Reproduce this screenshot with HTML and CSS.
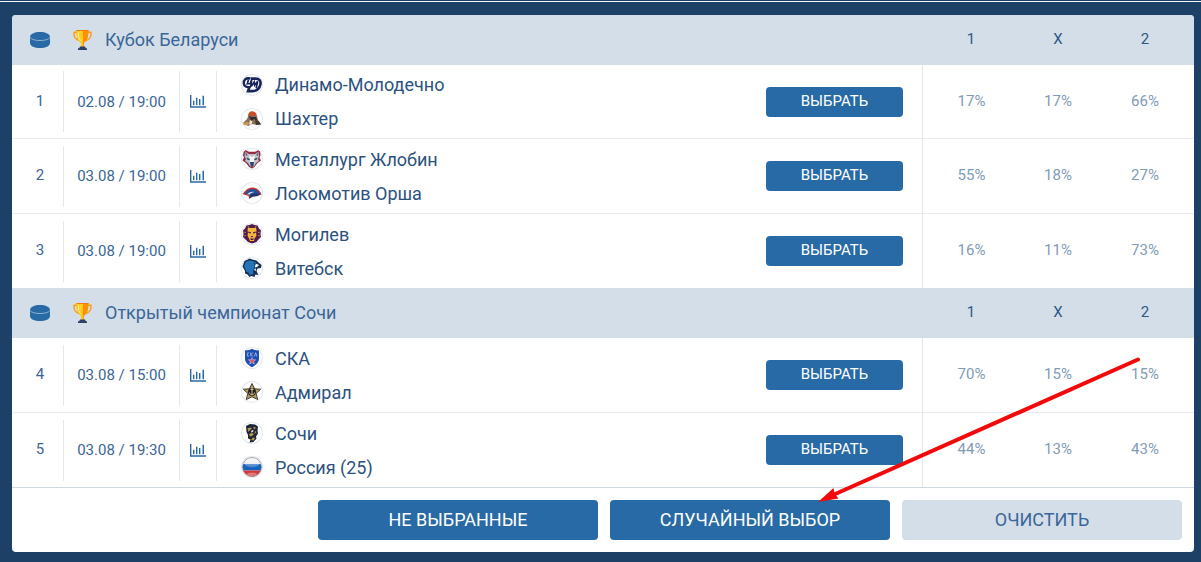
FILE: index.html
```html
<!DOCTYPE html>
<html lang="ru">
<head>
    <meta charset="UTF-8">
    <meta name="viewport" content="width=device-width, initial-scale=1.0">
    <title>Прогнозы на матчи</title>
    <link rel="stylesheet" href="styles.css">
</head>
<body>
    <!-- общие иконки -->
    <svg class="sprite" aria-hidden="true">
        <symbol id="puck" viewBox="0 0 20 16">
            <path d="M0 5C0 2 4.500 0 10 0s10 2 10 5v6c0 3-4.500 5-10 5S0 14 0 11z" fill="#286aa6"/>
            <path d="M0 5.500c1.500 2.200 5.500 3 10 3s8.500-.8 10-3" fill="none" stroke="#a9c3dc" stroke-width=".8"/>
        </symbol>
        <symbol id="trophy" viewBox="0 0 19 20">
            <path d="M4.500 2.300H1.200c-.8 4 1.300 7.400 5.300 8.200M14.500 2.300h3.300c.8 4-1.300 7.400-5.300 8.200" fill="none" stroke="#fb9a0c" stroke-width="1.500"/>
            <path d="M3.500 0h12c0 6-.8 11-4.600 12.700V17H8.100v-4.300C4.300 11 3.500 6 3.500 0z" fill="#ff9100"/>
            <path d="M3.500 0h6.300v17H8.100v-4.300C4.300 11 3.500 6 3.500 0z" fill="#ffcf1f"/>
            <path d="M5.300 2c0 4 .6 7 2.200 8.800" fill="none" stroke="#fff08a" stroke-width="1"/>
            <path d="M3.500 0h12v1h-12z" fill="#f07d00"/>
            <path d="M7 16.500h5l.8 1.700h1.200V20H5v-1.800h1.200z" fill="#2c4266"/>
        </symbol>
        <symbol id="chart" viewBox="0 0 16 13">
            <path d="M0 0h1.400v11.300H16v1.500H0zM3 5.700h1.400v4.600H3zM6 2.700h1.400v7.600H6zM9 4h1.400v6.300H9zM12.500.8H14v9.500h-1.500z" fill="#286aa6"/>
        </symbol>
    </svg>

    <main class="page">
        <form class="card">
            <table class="matches">
                <colgroup>
                    <col class="col-num">
                    <col class="col-date">
                    <col class="col-stat">
                    <col>
                    <col class="col-pick">
                    <col class="col-side">
                    <col class="col-mid">
                    <col class="col-side">
                </colgroup>

                <tbody>
                    <tr class="league">
                        <th class="sport"><svg class="puck"><use href="#puck"/></svg></th>
                        <th colspan="4" class="league-name"><div><svg class="trophy"><use href="#trophy"/></svg><span>Кубок Беларуси</span></div></th>
                        <th class="odd first">1</th>
                        <th class="odd">X</th>
                        <th class="odd last">2</th>
                    </tr>
                    <tr class="match">
                        <td><div class="cell num">1</div></td>
                        <td><div class="cell date">02.08 / 19:00</div></td>
                        <td><div class="cell"><a href="#" aria-label="Статистика"><svg class="chart"><use href="#chart"/></svg></a></div></td>
                        <td>
                            <div class="team">
                                <svg class="logo" viewBox="0 0 22 22">
                                    <path d="M9.500 4.500C4.500 3.300 2.600 6.500 2.800 9.300c.2 3 2.700 4.400 6.700 3.500" fill="none" stroke="#17255c" stroke-width="2.400"/>
                                    <path d="M10 4.600h4.500c4 0 5.600 2.400 4.900 6-.8 4.200-4 6.500-8.400 6.500H7l1.500-4.500" fill="none" stroke="#17255c" stroke-width="2.600"/>
                                    <path d="M7.500 5.500l-1.200 4.300 3-.3 1.400-4-1 7.500M10.500 12l2.700-4 .5 3.200 3-4-1.500 7" fill="none" stroke="#17255c" stroke-width="1.700"/>
                                </svg>
                                Динамо-Молодечно
                            </div>
                            <div class="team">
                                <svg class="logo" viewBox="0 0 22 22">
                                    <path d="M2 15l4-4 2-5 5-2 3 4 1 4 3 4-4 1-5-1-4 2z" fill="#8a6d55"/>
                                    <path d="M7 8c0-4 3-5.500 5.500-4.500S16 6.500 15.500 8l-4-1z" fill="#d0482c"/>
                                    <path d="M8 8l3 1 4 0 1.500 4-3.500-2-3 2z" fill="#302e34"/>
                                    <path d="M2 15.500l4-2 2 1.500-1 2.500-4-.5z" fill="#c39855"/>
                                    <path d="M9 12l2.500 1.500L10 17l-2-1z" fill="#eee3d6"/>
                                    <path d="M14 12l4 1.500 2 3-5 .5z" fill="#42352f"/>
                                </svg>
                                Шахтер
                            </div>
                        </td>
                        <td class="pick"><button type="button" class="btn">ВЫБРАТЬ</button></td>
                        <td class="odd first">17%</td>
                        <td class="odd">17%</td>
                        <td class="odd last">66%</td>
                    </tr>
                    <tr class="match">
                        <td><div class="cell num">2</div></td>
                        <td><div class="cell date">03.08 / 19:00</div></td>
                        <td><div class="cell"><a href="#" aria-label="Статистика"><svg class="chart"><use href="#chart"/></svg></a></div></td>
                        <td>
                            <div class="team">
                                <svg class="logo" viewBox="0 0 22 22">
                                    <path d="M3 1.500l5 2.300h6l5-2.300.5 6-1 2 1.500 3-4 3-2.500 3.500L11 20.500 8 19l-2.500-3.500-4-3 1.500-3-1-2z" fill="#9c2941"/>
                                    <path d="M4 3.500L8 6h6l4-2.500v5L17 11l1 2-3 2-2 3.500h-4L7 15l-3-2 1-2-1.500-2.500z" fill="#b9c1ca"/>
                                    <path d="M8 7l3 2 3-2-1 7-2 1-2-1z" fill="#f3f4f6"/>
                                    <path d="M5.500 9.500L9 11l-.8 1.200-2-.7zM16.500 9.500L13 11l.8 1.200 2-.7zM9 14h4l-.7 4.500h-2.600z" fill="#28496f"/>
                                    <path d="M4 3.500L6.800 7 5 8zM18 3.500L15.200 7 17 8z" fill="#596776"/>
                                </svg>
                                Металлург Жлобин
                            </div>
                            <div class="team">
                                <svg class="logo" viewBox="0 0 22 22">
                                    <path d="M1.500 12C5 7 8.500 5 12 5.500c4.500.5 7 3 8.500 7-3 1.500-5 1.500-8 1.500l-4 2.800-1-2.800z" fill="#c6322f"/>
                                    <path d="M3.500 11.500C7 8 9 6.800 12 7c3.500.3 5.500 2 7 4.500-3 .5-5.500 1-8.500 2z" fill="#24539b"/>
                                    <path d="M6 12.300c2.500-2 4.500-2.800 7-2.300-2 .4-3.500 1.200-4.500 2.500z" fill="#dfe5f1"/>
                                    <path d="M9.500 13c3-1.500 6-2 10-1.200l-3.500 2.500-5 .5-3 2z" fill="#1d356e"/>
                                </svg>
                                Локомотив Орша
                            </div>
                        </td>
                        <td class="pick"><button type="button" class="btn">ВЫБРАТЬ</button></td>
                        <td class="odd first">55%</td>
                        <td class="odd">18%</td>
                        <td class="odd last">27%</td>
                    </tr>
                    <tr class="match">
                        <td><div class="cell num">3</div></td>
                        <td><div class="cell date">03.08 / 19:00</div></td>
                        <td><div class="cell"><a href="#" aria-label="Статистика"><svg class="chart"><use href="#chart"/></svg></a></div></td>
                        <td>
                            <div class="team">
                                <svg class="logo" viewBox="0 0 22 22">
                                    <path d="M11 1l2.500 1 3 .5 1.500 3 2 2-.5 3.500.5 3-2.500 2.500-2 2.500-4.500 1.500L7 19l-2.500-2.500L2 14l.5-3L2 7.500l2-2 1.500-3 3-.5z" fill="#531b4b"/>
                                    <path d="M7 4.500L9 5h4l2-.5.5 3-.5 2.500.5 2.500-2 3-.5 2.500h-4L8 15.500l-1.500-3L7 10l-.5-2.500z" fill="#f3b83a"/>
                                    <path d="M7 8.500l3 .7v1.300l-2.500-.5zM15 8.500l-3 .7v1.300l2.500-.5zM9.500 13h3L11 14.500zM9 15.500h4l-.8 1.500H9.800z" fill="#531b4b"/>
                                    <path d="M3 9l2 .7M3 13l2-.8M19 9l-2 .7M19 13l-2-.8M7 3l.7 1.500M15 3l-.7 1.500" stroke="#e6a33a" stroke-width=".7"/>
                                </svg>
                                Могилев
                            </div>
                            <div class="team">
                                <svg class="logo" viewBox="0 0 22 22">
                                    <path d="M1.500 9.500L3.500 4l3.500-1.500 1-1 3.500 1 4 1 2 2L20.500 8l-.5 3-3.500.5-1 2.500 2 4-3-.5-1 2.500-3-1-2 1-2-2.500-2.500-1V14z" fill="#172f56"/>
                                    <path d="M3 9.500l1.700-4.500L8 3.500l3 .3L15 5.500l-1 2-1 4-1 3 .5 3-2-.5-1.500 1.500-1.500-3-2.500-1L4.500 12z" fill="#2474b9"/>
                                    <path d="M14.500 6.500l3.500 1.500-2 2-2 .5zM13 13l1.500-2 .5 3z" fill="#fff"/>
                                    <path d="M12.500 5.500L15 7l-1.500 1z" fill="#172f56"/>
                                </svg>
                                Витебск
                            </div>
                        </td>
                        <td class="pick"><button type="button" class="btn">ВЫБРАТЬ</button></td>
                        <td class="odd first">16%</td>
                        <td class="odd">11%</td>
                        <td class="odd last">73%</td>
                    </tr>
                </tbody>

                <tbody>
                    <tr class="league">
                        <th class="sport"><svg class="puck"><use href="#puck"/></svg></th>
                        <th colspan="4" class="league-name"><div><svg class="trophy"><use href="#trophy"/></svg><span>Открытый чемпионат Сочи</span></div></th>
                        <th class="odd first">1</th>
                        <th class="odd">X</th>
                        <th class="odd last">2</th>
                    </tr>
                    <tr class="match">
                        <td><div class="cell num">4</div></td>
                        <td><div class="cell date">03.08 / 15:00</div></td>
                        <td><div class="cell"><a href="#" aria-label="Статистика"><svg class="chart"><use href="#chart"/></svg></a></div></td>
                        <td>
                            <div class="team">
                                <svg class="logo" viewBox="0 0 22 22">
                                    <path d="M4 3.500c3 0 5-.6 7-1.700 2 1.100 4 1.700 7 1.700v8c0 4-3 6.700-7 8.700-4-2-7-4.700-7-8.700z" fill="#1950b2"/>
                                    <path d="M8.200 6H6.300v3h1.900M9.800 5.500v3.800M12 5.500l-2 2 2 2M13.500 9.300l1.200-3.600 1.200 3.600" fill="none" stroke="#aab6e4" stroke-width=".9"/>
                                    <path d="M11 10.500l1 2.300h2.600l-2 1.700.8 2.500-2.400-1.500L8.600 17l.8-2.500-2-1.700H10z" fill="#e0506a" stroke="#e6d9ec" stroke-width=".5"/>
                                </svg>
                                СКА
                            </div>
                            <div class="team">
                                <svg class="logo" viewBox="0 0 22 22">
                                    <path d="M11 2.500l2.600 5.300 6.100.4-4.500 4.200 1.500 6.100-5.700-2.700-5.700 2.700 1.500-6.100-4.500-4.200 6.100-.4z" fill="#b39b66" stroke="#454034" stroke-width="1"/>
                                    <circle cx="11" cy="11" r="4" fill="#211f1e"/>
                                    <path d="M11 6.500V14M8.500 11.500c0 3 5 3 5 0M9.500 8.500h3" fill="none" stroke="#d9c795" stroke-width="1"/>
                                </svg>
                                Адмирал
                            </div>
                        </td>
                        <td class="pick"><button type="button" class="btn">ВЫБРАТЬ</button></td>
                        <td class="odd first">70%</td>
                        <td class="odd">15%</td>
                        <td class="odd last">15%</td>
                    </tr>
                    <tr class="match">
                        <td><div class="cell num">5</div></td>
                        <td><div class="cell date">03.08 / 19:30</div></td>
                        <td><div class="cell"><a href="#" aria-label="Статистика"><svg class="chart"><use href="#chart"/></svg></a></div></td>
                        <td>
                            <div class="team">
                                <svg class="logo" viewBox="0 0 22 22">
                                    <path d="M5 4l4-2 5 .5 3 2-.5 4 .5 3-2 3 .5 2-3 3.500-4 .5 1-3-2.500-1L7 13l-1.500-3z" fill="#1e2739"/>
                                    <path d="M6.500 6.500L9 5.500l2 1-2 1.500-1.500 2zM12 5l3 .5-1.500 2zM8 12l3-1 2 1-2 2-2 .5zM14 9l1.500 1-2 2zM10 18l2-2.500 2 .5-1.500 2.500z" fill="#bd9952"/>
                                    <path d="M10.500 8.500l2-.5-.5 2-2 .5z" fill="#f0ebdf"/>
                                </svg>
                                Сочи
                            </div>
                            <div class="team">
                                <svg class="logo" viewBox="0 0 22 22">
                                    <defs>
                                        <clipPath id="ball"><circle cx="11" cy="11" r="9.500"/></clipPath>
                                        <linearGradient id="shine" x2="0" y2="1">
                                            <stop offset="0" stop-color="#fff" stop-opacity=".8"/>
                                            <stop offset="1" stop-color="#fff" stop-opacity=".15"/>
                                        </linearGradient>
                                    </defs>
                                    <g clip-path="url(#ball)">
                                        <path d="M0 0h22v8H0z" fill="#e3e5e9"/>
                                        <path d="M0 8h22v6.500H0z" fill="#1462bd"/>
                                        <path d="M0 14.500h22V22H0z" fill="#cf3a37"/>
                                        <ellipse cx="11" cy="6.500" rx="8" ry="5" fill="url(#shine)"/>
                                        <ellipse cx="11" cy="18.500" rx="5" ry="2" fill="#f0918c" opacity=".7"/>
                                    </g>
                                    <circle cx="11" cy="11" r="9.500" fill="none" stroke="#8f8994" stroke-width=".7"/>
                                </svg>
                                Россия (25)
                            </div>
                        </td>
                        <td class="pick"><button type="button" class="btn">ВЫБРАТЬ</button></td>
                        <td class="odd first">44%</td>
                        <td class="odd">13%</td>
                        <td class="odd last">43%</td>
                    </tr>
                </tbody>
            </table>

            <div class="actions">
                <button type="button" class="btn btn-large">НЕ ВЫБРАННЫЕ</button>
                <button type="button" class="btn btn-large">СЛУЧАЙНЫЙ ВЫБОР</button>
                <button type="reset" class="btn btn-large btn-light">ОЧИСТИТЬ</button>
            </div>

            <!-- стрелка-подсказка к кнопке случайного выбора -->
            <svg class="pointer" viewBox="0 0 326 150" aria-hidden="true">
                <path d="M322 4.500L17 140" fill="none" stroke="#f20a0a" stroke-width="4" stroke-linecap="round"/>
                <path d="M2 147l15.500-14 1 5.500 4 5z" fill="#f20a0a"/>
            </svg>
        </form>
    </main>
</body>
</html>
```

FILE: styles.css
```css
* {
    margin: 0;
    padding: 0;
    box-sizing: border-box;
}

body {
    font-family: Roboto, 'Noto Sans', sans-serif;
    font-size: 15px;
    color: #3a6698;
    background: #1d4166;
    min-height: 100vh;
    padding-top: 1px;
}

.sprite {
    position: absolute;
    width: 0;
    height: 0;
}

.page {
    border-top: 1px solid #f4f7fa;
    padding: 13px 7px 10px 12px;
}

.card {
    position: relative;
    background: #fff;
    border-radius: 4px;
    overflow: hidden;
}

.matches {
    width: 100%;
    table-layout: fixed;
    border-collapse: separate;
    border-spacing: 0;
}

.col-num {
    width: 52px;
}

.col-date {
    width: 116px;
}

.col-stat {
    width: 37px;
}

.col-pick {
    width: 156px;
}

.col-side {
    width: 92px;
}

.col-mid {
    width: 88px;
}

.league th {
    height: 50px;
    background: #d4dee8;
    font-weight: 400;
    text-align: center;
}

.league .sport {
    padding-left: 4px;
}

.league-name div {
    display: flex;
    align-items: center;
    gap: 13px;
    padding-left: 9px;
    font-size: 18px;
}

.league-name span {
    padding-bottom: 2px;
}

.puck {
    display: block;
    width: 20px;
    height: 16px;
    margin: 0 auto;
}

.trophy {
    width: 19px;
    height: 20px;
}

.match td {
    height: 74px;
    border-bottom: 1px solid #e8ebee;
}

.match:nth-last-child(2) td {
    height: 75px;
}

.match:last-child td {
    border-bottom: none;
}

.cell {
    display: flex;
    align-items: center;
    justify-content: center;
    height: 61px;
    border-right: 1px solid #e4e8ec;
}

.num {
    padding: 0 0 2px 5px;
}

.date {
    white-space: nowrap;
}

.chart {
    display: block;
    width: 16px;
    height: 13px;
}

.team {
    display: flex;
    align-items: center;
    gap: 12px;
    height: 34px;
    padding-left: 24px;
    font-size: 18px;
    color: #2b527f;
}

.logo {
    width: 22px;
    height: 22px;
    border-radius: 50%;
    box-shadow: inset 0 0 0 1px #e4e9f1;
}

.odd {
    text-align: center;
}

th.odd {
    color: #2f5886;
    padding-bottom: 2px;
}

td.odd {
    color: #7f9bb8;
    padding-bottom: 2px;
}

.first {
    padding-left: 6px;
}

.last {
    padding-right: 6px;
}

td.first {
    border-left: 1px solid #e0e6ec;
}

.btn {
    width: 137px;
    height: 30px;
    padding-bottom: 2px;
    border: none;
    border-radius: 4px;
    background: #286aa6;
    color: #fff;
    font-family: inherit;
    font-size: 15px;
    cursor: pointer;
}

.btn:hover {
    opacity: 0.9;
}

.actions {
    display: flex;
    justify-content: flex-end;
    gap: 12px;
    padding: 12px;
    border-top: 1px solid #ced8e2;
}

.btn-large {
    width: 280px;
    height: 40px;
    font-size: 18px;
}

.btn-light {
    background: #d4dee8;
    color: #3a6698;
}

.pointer {
    position: absolute;
    top: 340px;
    right: 52px;
    width: 326px;
    height: 150px;
    pointer-events: none;
}
```
